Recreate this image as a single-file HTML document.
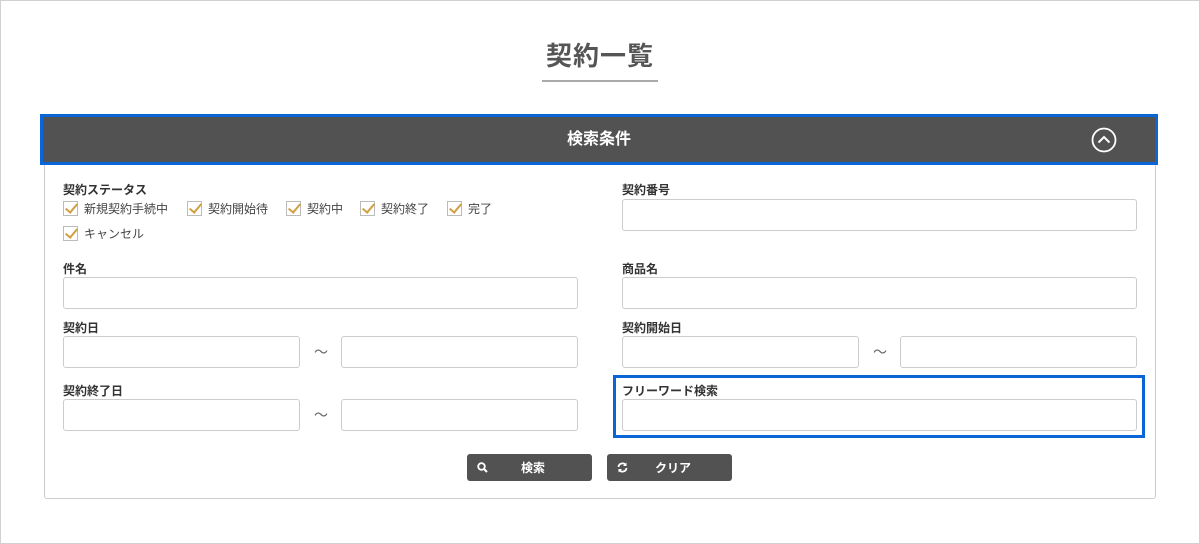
<!DOCTYPE html>
<html><head><meta charset="utf-8"><style>
*{box-sizing:border-box;margin:0;padding:0}
body{width:1200px;height:544px;background:#fff;font-family:"Liberation Sans","Noto Sans CJK JP",sans-serif;position:relative;overflow:hidden;color:#333}
.frame{position:absolute;left:0;top:0;width:1200px;height:544px;border:1px solid #d0d0d0}
.title{position:absolute;left:0;width:1200px;top:36px;text-align:center;font-size:26px;color:#555;letter-spacing:1px;font-weight:bold}
.uline{position:absolute;left:542px;width:116px;top:80px;height:2px;background:#aaa}
.panel{position:absolute;left:44px;top:118px;width:1112px;height:381px;border:1px solid #ccc;border-radius:3px}
.hdr{position:absolute;left:40px;top:114px;width:1118px;height:51px;border:3px solid #0a66d6;background:#525252;color:#fff;font-size:16px;font-weight:bold;text-align:center;line-height:45px}
.lbl{position:absolute;font-size:12px;font-weight:bold;color:#333}
.in{position:absolute;height:32px;border:1px solid #ccc;border-radius:3px;background:#fff}
.cb{position:absolute;font-size:12px;color:#444;display:flex;align-items:center}
.cb i{display:inline-block;width:15px;height:15px;border:1px solid #bbb;margin-right:6px;position:relative}
.cb i:after{content:"";position:absolute;left:4px;top:-1px;width:5px;height:10px;border-right:2px solid #d0a040;border-bottom:2px solid #d0a040;transform:rotate(40deg)}
.til{position:absolute;font-size:14px;color:#666}
.btn{position:absolute;top:454px;width:125px;height:27px;background:#525252;border-radius:3px;color:#fff;font-size:12px;font-weight:bold}
.btn span{position:absolute;left:54px;top:5px}
.blue{position:absolute;left:613px;top:375px;width:532px;height:63px;border:3px solid #0a66d6}
</style></head><body>
<div class="frame"></div>
<div class="title">契約一覧</div><div class="uline"></div>
<div class="panel"></div>
<div class="hdr">検索条件
<svg style="position:absolute;right:38px;top:10px" width="26" height="26" viewBox="0 0 26 26"><circle cx="13" cy="13" r="11.5" fill="none" stroke="#fff" stroke-width="1.8"/><path d="M7.5 15.5 L13 10 L18.5 15.5" fill="none" stroke="#fff" stroke-width="2"/></svg></div>
<div class="lbl" style="left:63px;top:181px">契約ステータス</div>
<div class="cb" style="left:63px;top:200px"><i></i>新規契約手続中</div>
<div class="cb" style="left:187px;top:200px"><i></i>契約開始待</div>
<div class="cb" style="left:286px;top:200px"><i></i>契約中</div>
<div class="cb" style="left:360px;top:200px"><i></i>契約終了</div>
<div class="cb" style="left:447px;top:200px"><i></i>完了</div>
<div class="cb" style="left:63px;top:225px"><i></i>キャンセル</div>
<div class="lbl" style="left:622px;top:181px">契約番号</div>
<div class="in" style="left:622px;top:199px;width:515px"></div>
<div class="lbl" style="left:63px;top:260px">件名</div>
<div class="in" style="left:63px;top:277px;width:515px"></div>
<div class="lbl" style="left:622px;top:260px">商品名</div>
<div class="in" style="left:622px;top:277px;width:515px"></div>
<div class="lbl" style="left:63px;top:319px">契約日</div>
<div class="in" style="left:63px;top:336px;width:237px"></div><div class="til" style="left:314px;top:342px">～</div>
<div class="in" style="left:341px;top:336px;width:237px"></div>
<div class="lbl" style="left:622px;top:319px">契約開始日</div>
<div class="in" style="left:622px;top:336px;width:237px"></div><div class="til" style="left:873px;top:342px">～</div>
<div class="in" style="left:900px;top:336px;width:237px"></div>
<div class="lbl" style="left:63px;top:382px">契約終了日</div>
<div class="in" style="left:63px;top:399px;width:237px"></div><div class="til" style="left:314px;top:405px">～</div>
<div class="in" style="left:341px;top:399px;width:237px"></div>
<div class="blue"></div>
<div class="lbl" style="left:622px;top:382px">フリーワード検索</div>
<div class="in" style="left:622px;top:399px;width:515px"></div>
<div class="btn" style="left:467px"><svg style="position:absolute;left:10px;top:8px" width="11" height="11" viewBox="0 0 11 11"><circle cx="4.5" cy="4.5" r="3.3" fill="none" stroke="#fff" stroke-width="1.8"/><path d="M7 7 L10 10" stroke="#fff" stroke-width="2"/></svg><span>検索</span></div>
<div class="btn" style="left:607px"><svg style="position:absolute;left:10px;top:8px" width="11" height="11" viewBox="0 0 11 11"><path d="M1.5 5 A4 4 0 0 1 9 3.5 M9.5 6 A4 4 0 0 1 2 7.5" fill="none" stroke="#fff" stroke-width="1.8"/><path d="M9.5 0.5 V4 H6 Z M1.5 10.5 V7 H5 Z" fill="#fff"/></svg><span style="left:48px">クリア</span></div>
</body></html>
